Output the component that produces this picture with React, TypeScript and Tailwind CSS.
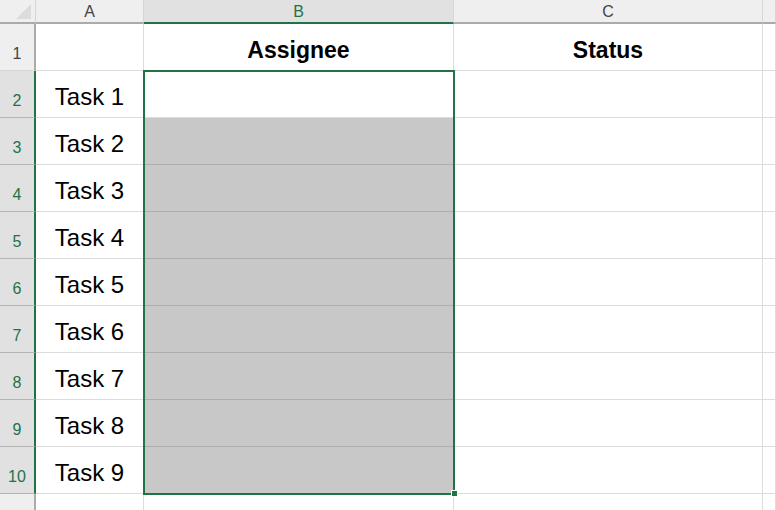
import React from 'react';

const tasks = ['Task 1', 'Task 2', 'Task 3', 'Task 4', 'Task 5', 'Task 6', 'Task 7', 'Task 8', 'Task 9'];

function Corner() {
  return (
    <div className="relative border-r border-b-2 border-r-[#d6d6d6] border-b-[#ababab] bg-[#efefef]">
      <svg className="absolute right-[4px] bottom-[3px]" width="15" height="15" viewBox="0 0 15 15">
        <polygon points="15,0 15,15 0,15" fill="#dcdcdc" />
      </svg>
    </div>
  );
}

function ColHead({ label, active }: { label: string; active?: boolean }) {
  return (
    <div
      className={`flex items-center justify-center pt-[1px] border-r border-[#d6d6d6] text-[16px] ${
        active
          ? 'border-b-2 border-b-[#217346] bg-[#e1e1e1] text-[#217346]'
          : 'border-b-2 border-b-[#ababab] bg-[#efefef] text-[#444]'
      }`}
    >
      {label}
    </div>
  );
}

function RowHead({ n, active }: { n?: number; active?: boolean }) {
  return (
    <div
      className={`flex items-end justify-center pb-[4px] text-[16px] ${
        active
          ? 'border-r-2 border-r-[#217346] border-b border-b-[#b4b4b4] bg-[#e1e1e1] text-[#217346]'
          : 'border-r-2 border-r-[#ababab] border-b border-b-[#d6d6d6] bg-[#efefef] text-[#444]'
      }`}
    >
      {n}
    </div>
  );
}

function Cell({ children, bold, fill }: { children?: React.ReactNode; bold?: boolean; fill?: boolean }) {
  return (
    <div
      className={`flex items-center justify-center pt-[6px] text-black border-r border-b ${
        fill ? 'bg-[#c8c8c8] border-b-[#adadad] border-r-[#d6d6d6]' : 'border-[#dcdcdc]'
      } ${bold ? 'font-bold text-[23px]' : 'text-[24px]'}`}
    >
      {children}
    </div>
  );
}

export default function App() {
  return (
    <div className="relative h-[510px] w-[776px] overflow-hidden bg-white font-['Liberation_Sans',Arial,sans-serif]">
      <div className="grid grid-cols-[36px_108px_310px_309px_1fr] grid-rows-[24px_repeat(11,47px)]">
        <Corner />
        <ColHead label="A" />
        <ColHead label="B" active />
        <ColHead label="C" />
        <ColHead label="" />

        <RowHead n={1} />
        <Cell />
        <Cell bold>Assignee</Cell>
        <Cell bold>Status</Cell>
        <Cell />

        {tasks.map((t, i) => (
          <React.Fragment key={t}>
            <RowHead n={i + 2} active />
            <Cell>{t}</Cell>
            <Cell fill={i > 0} />
            <Cell />
            <Cell />
          </React.Fragment>
        ))}

        <RowHead />
        <Cell />
        <Cell />
        <Cell />
        <Cell />
      </div>

      {/* selection outline + fill handle */}
      <div className="pointer-events-none absolute left-[143px] top-[70px] h-[425px] w-[312px] border-2 border-[#217346]" />
      <div className="absolute left-[451px] top-[490px] h-[7px] w-[7px] border border-white bg-[#217346]" />
    </div>
  );
}
